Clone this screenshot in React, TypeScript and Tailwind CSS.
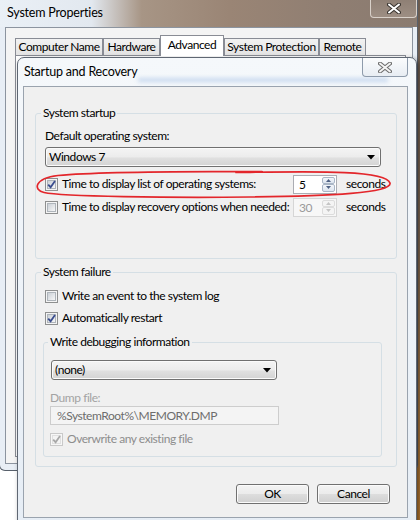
import React from "react";

function Check({ checked = false, disabled = false }: { checked?: boolean; disabled?: boolean }) {
  return (
    <span
      className={
        disabled
          ? "relative flex h-[13px] w-[13px] shrink-0 items-center justify-center border border-[#c9c9c9] bg-[#f7f7f7]"
          : "relative flex h-[13px] w-[13px] shrink-0 items-center justify-center border border-[#8e8f8f] bg-[#f4f4f4]"
      }
    >
      <span
        className={
          disabled
            ? "h-[9px] w-[9px] border border-[#e0e0e0] bg-[#f4f4f4]"
            : "h-[9px] w-[9px] border border-[#aeb4ba] bg-[linear-gradient(135deg,#cbd0d6,#f7f7f7)]"
        }
      />
      {checked && (
        <svg className="absolute left-0 top-0" width="11" height="11" viewBox="0 0 11 11">
          <path d="M2.2 5.6 L4.6 8.2 L9 2" fill="none" stroke={disabled ? "#a8a8a8" : "#3a4d8e"} strokeWidth="1.8" />
        </svg>
      )}
    </span>
  );
}

function Select({ value, className }: { value: string; className: string }) {
  return (
    <div
      className={`flex h-[20px] items-center justify-between rounded-[3px] border border-[#707070] bg-[linear-gradient(180deg,#f4f4f4_0%,#ececec_50%,#e0e0e0_55%,#d3d3d3_100%)] pl-[3px] pr-[5px] shadow-[inset_0_0_0_1px_#fbfbfb] ${className}`}
    >
      <span className="leading-[16px]">{value}</span>
      <svg width="8" height="5" viewBox="0 0 8 5">
        <path d="M0 0 H8 L4 4.5 Z" fill="#000" />
      </svg>
    </div>
  );
}

function Arrow({ up, disabled }: { up?: boolean; disabled?: boolean }) {
  return (
    <span
      className={
        disabled
          ? "flex flex-1 items-center justify-center rounded-[2px] border border-[#dcdcdc] bg-[#f4f4f4]"
          : "flex flex-1 items-center justify-center rounded-[2px] border border-[#a9b6c6] bg-[linear-gradient(180deg,#f3f6fa,#dde5ef)]"
      }
    >
      <svg width="5" height="3" viewBox="0 0 5 3">
        <path d={up ? "M0 3 L2.5 0 L5 3 Z" : "M0 0 L2.5 3 L5 0 Z"} fill={disabled ? "#c4c4c4" : "#4e6184"} />
      </svg>
    </span>
  );
}

function Spin({ value, disabled }: { value: string; disabled?: boolean }) {
  return (
    <div
      className={
        disabled
          ? "flex h-[19px] w-[44px] shrink-0 border border-[#d6d6d6] bg-[#f7f7f7]"
          : "flex h-[19px] w-[44px] shrink-0 border border-[#abadb3] bg-white"
      }
    >
      <span className={disabled ? "flex-1 pl-[5px] leading-[17px] text-[#9a9a9a]" : "flex-1 pl-[5px] leading-[17px]"}>
        {value}
      </span>
      <div className="flex w-[15px] flex-col p-[1px]">
        <Arrow up disabled={disabled} />
        <Arrow disabled={disabled} />
      </div>
    </div>
  );
}

function Btn({ label }: { label: string }) {
  return (
    <button className="h-[20px] w-[73px] rounded-[3px] border border-[#707070] bg-[linear-gradient(180deg,#f3f3f3_0%,#ebebeb_50%,#dddddd_52%,#d0d0d0_100%)] leading-[16px] shadow-[inset_0_0_0_1px_#fbfbfb]">
      {label}
    </button>
  );
}

function Tab({ label, width, active }: { label: string; width: string; active?: boolean }) {
  return (
    <div
      className={
        active
          ? `relative z-10 mb-[-1px] flex h-[21px] items-start justify-center border border-b-0 border-[#898c95] bg-white pt-[1px] leading-[16px] ${width}`
          : `flex h-[17px] items-center justify-center border border-b-0 border-[#898c95] bg-[linear-gradient(180deg,#f2f2f2,#e3e3e3)] leading-[16px] ${width}`
      }
    >
      {label}
    </div>
  );
}

export default function App() {
  return (
    <div className="relative h-[520px] w-[420px] overflow-hidden whitespace-nowrap bg-white font-['Lato',sans-serif] text-[12px] tracking-[-0.45px] text-black">
      <div className="absolute right-0 top-0 h-full w-[4px] bg-[linear-gradient(180deg,#6b5b4f,#7a6451_45%,#b5772f)]" />

      {/* System Properties */}
      <div className="absolute left-[-1px] top-0 flex h-[471px] w-[419px] flex-col rounded-b-[6px] border border-t-0 border-[#58606b] bg-[#e8eef5]">
        <div className="flex h-[27px] items-start justify-between bg-[linear-gradient(90deg,#eaf0f6_0%,#e2e8ef_22%,#a79585_34%,#9a8575_55%,#8f7e72_80%,#8a7b70_100%)]">
          <span className="pl-[7px] pt-[5px] text-[12.5px] leading-[16px] tracking-[-0.2px]">System Properties</span>
          <div className="flex h-[18px] w-[47px] items-center justify-center rounded-b-[4px] border border-t-0 border-[#d9d1ca] bg-[linear-gradient(180deg,#8f8075,#9d8e83)]">
            <svg width="14" height="11" viewBox="0 0 14 11">
              <path d="M2 1.5 L12 9.5 M12 1.5 L2 9.5" stroke="#3a3530" strokeWidth="4" strokeLinecap="round" />
              <path d="M2 1.5 L12 9.5 M12 1.5 L2 9.5" stroke="#ffffff" strokeWidth="2" strokeLinecap="round" />
            </svg>
          </div>
        </div>
        <div className="mb-[6px] ml-[5px] mr-[4px] flex flex-1 flex-col border border-[#8c949f] bg-[#f4f4f4]">
          <div className="flex h-[27px] items-end pl-[9px]">
            <Tab label="Computer Name" width="w-[88px]" />
            <Tab label="Hardware" width="w-[57px]" />
            <Tab label="Advanced" width="w-[64px]" active />
            <Tab label="System Protection" width="w-[95px]" />
            <Tab label="Remote" width="w-[47px]" />
          </div>
          <div className="mb-[6px] ml-[9px] mr-[6px] flex-1 border border-[#898c95] bg-white" />
        </div>
      </div>

      {/* Startup and Recovery */}
      <div className="absolute left-[17px] top-[57px] h-[475px] w-[400px] rounded-t-[7px] border border-[#5f6773] bg-[linear-gradient(180deg,#f5f8fb,#e6edf5)] shadow-[2px_2px_5px_rgba(0,0,0,0.45)]">
        <div className="relative flex h-[28px] items-start justify-between">
          <div className="absolute left-[120px] top-[20px] h-[4px] w-[250px] bg-[#a9c3e6] opacity-60 blur-[2px]" />
          <span className="relative pl-[6px] pt-[6px] text-[12.5px] leading-[16px] tracking-[-0.2px]">Startup and Recovery</span>
          <div className="relative mr-[8px] flex h-[19px] w-[46px] items-center justify-center rounded-b-[4px] border border-t-0 border-[#8e9bab] bg-[linear-gradient(180deg,#fbfcfd,#e8edf3)]">
            <svg width="14" height="11" viewBox="0 0 14 11">
              <path d="M2 1.5 L12 9.5 M12 1.5 L2 9.5" stroke="#6d6d6d" strokeWidth="4" strokeLinecap="round" />
              <path d="M2 1.5 L12 9.5 M12 1.5 L2 9.5" stroke="#f4f4f4" strokeWidth="2" strokeLinecap="round" />
            </svg>
          </div>
        </div>

        <div className="ml-[5px] h-[432px] w-[385px] border border-[#9aa3ae] bg-[#f0f0f0] pl-[11px] pr-[10px] pt-[18px]">
          <fieldset className="m-0 rounded-[3px] border border-[#d5dfe5] p-0">
            <legend className="ml-[5px] px-[2px] leading-[16px]">System startup</legend>
            <div className="px-[9px] pb-[42px] pt-[7px]">
              <div className="leading-[16px]">Default operating system:</div>
              <Select value="Windows 7" className="mt-[3px] w-[336px]" />
              <div className="mt-[8px] flex h-[18px] items-center">
                <Check checked />
                <span className="ml-[4px] w-[231px] leading-[16px]">Time to display list of operating systems:</span>
                <Spin value="5" />
                <span className="ml-[9px] leading-[16px]">seconds</span>
              </div>
              <div className="mt-[5px] flex h-[18px] items-center">
                <Check />
                <span className="ml-[4px] w-[231px] leading-[16px]">Time to display recovery options when needed:</span>
                <Spin value="30" disabled />
                <span className="ml-[9px] leading-[16px]">seconds</span>
              </div>
            </div>
          </fieldset>

          <fieldset className="m-0 mt-[5px] rounded-[3px] border border-[#d5dfe5] p-0">
            <legend className="ml-[5px] px-[2px] leading-[16px]">System failure</legend>
            <div className="px-[9px] pb-[9px] pt-[8px]">
              <div className="flex h-[16px] items-center">
                <Check />
                <span className="ml-[4px] leading-[16px]">Write an event to the system log</span>
              </div>
              <div className="mt-[6px] flex h-[16px] items-center">
                <Check checked />
                <span className="ml-[4px] leading-[16px]">Automatically restart</span>
              </div>
              <fieldset className="m-0 ml-[-2px] mr-[5px] mt-[8px] rounded-[3px] border border-[#d5dfe5] p-0">
                <legend className="ml-[4px] px-[2px] leading-[16px]">Write debugging information</legend>
                <div className="pb-[9px] pl-[6px] pt-[10px]">
                  <Select value="(none)" className="ml-[1px] w-[226px]" />
                  <div className="mt-[10px] leading-[16px] text-[#a3a3a3]">Dump file:</div>
                  <div className="flex h-[19px] w-[229px] items-center border border-[#cdcdcd] bg-[#f4f4f4] pl-[6px] leading-[16px] text-[#6d6d6d]">
                    %SystemRoot%\MEMORY.DMP
                  </div>
                  <div className="mt-[6px] flex h-[16px] items-center">
                    <Check checked disabled />
                    <span className="ml-[4px] leading-[16px] text-[#8d8d8d]">Overwrite any existing file</span>
                  </div>
                </div>
              </fieldset>
            </div>
          </fieldset>

          <div className="mr-[7px] mt-[17px] flex justify-end gap-[8px]">
            <Btn label="OK" />
            <Btn label="Cancel" />
          </div>
        </div>
      </div>

      <svg className="pointer-events-none absolute left-0 top-0" width="420" height="520" viewBox="0 0 420 520">
        <path
          d="M236 172.5 C310 171.5 386 169.5 390 183 C392.5 193 330 196 250 197 C170 198 62 196.5 44 192.5 C33 190 34 178.5 58 175.5 C110 171 180 172 262 171.5"
          fill="none"
          stroke="#e3262b"
          strokeWidth="1.7"
          strokeLinecap="round"
        />
      </svg>
    </div>
  );
}
